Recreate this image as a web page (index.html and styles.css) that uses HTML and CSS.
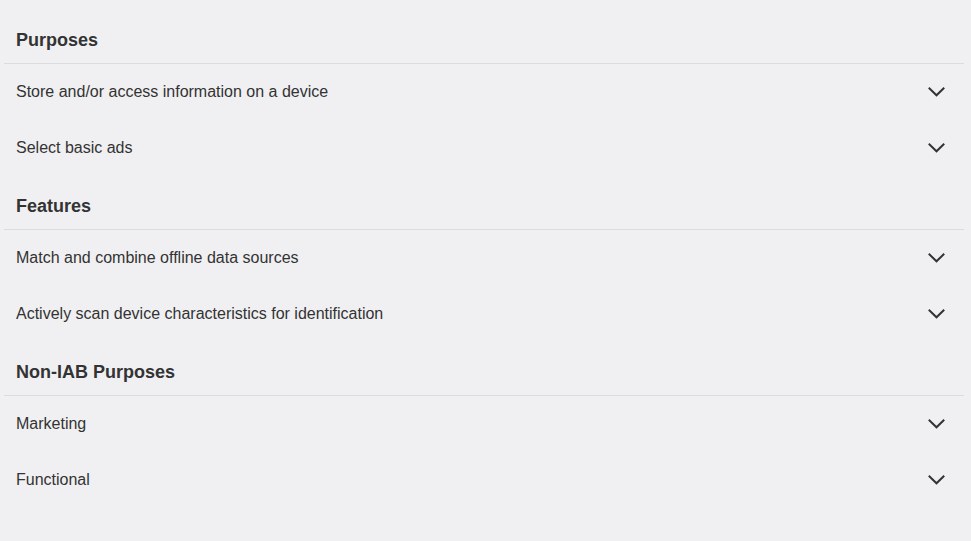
FILE: index.html
```html
<!DOCTYPE html>
<html lang="en">
<head>
<meta charset="utf-8">
<title>Purposes</title>
<link rel="stylesheet" href="styles.css">
</head>
<body>
<div class="page">
  <section class="group">
    <h2 class="group-title">Purposes</h2>
    <div class="item"><span class="item-label">Store and/or access information on a device</span><svg class="chev" viewBox="0 0 17 10" width="17" height="10"><path d="M1.5 1.5 L8.5 8.3 L15.5 1.5"/></svg></div>
    <div class="item"><span class="item-label">Select basic ads</span><svg class="chev" viewBox="0 0 17 10" width="17" height="10"><path d="M1.5 1.5 L8.5 8.3 L15.5 1.5"/></svg></div>
  </section>
  <section class="group">
    <h2 class="group-title">Features</h2>
    <div class="item"><span class="item-label">Match and combine offline data sources</span><svg class="chev" viewBox="0 0 17 10" width="17" height="10"><path d="M1.5 1.5 L8.5 8.3 L15.5 1.5"/></svg></div>
    <div class="item"><span class="item-label">Actively scan device characteristics for identification</span><svg class="chev" viewBox="0 0 17 10" width="17" height="10"><path d="M1.5 1.5 L8.5 8.3 L15.5 1.5"/></svg></div>
  </section>
  <section class="group">
    <h2 class="group-title">Non-IAB Purposes</h2>
    <div class="item"><span class="item-label">Marketing</span><svg class="chev" viewBox="0 0 17 10" width="17" height="10"><path d="M1.5 1.5 L8.5 8.3 L15.5 1.5"/></svg></div>
    <div class="item"><span class="item-label">Functional</span><svg class="chev" viewBox="0 0 17 10" width="17" height="10"><path d="M1.5 1.5 L8.5 8.3 L15.5 1.5"/></svg></div>
  </section>
</div>
</body>
</html>
```
FILE: styles.css
```css
html, body {
  margin: 0;
  padding: 0;
  background: #f0f0f2;
}
body {
  font-family: "Liberation Sans", Arial, Helvetica, sans-serif;
  color: #333333;
  width: 971px;
  height: 541px;
  overflow: hidden;
}
.page {
  padding: 10px 7px 0 4px;
}
.group-title {
  margin: 0;
  font-size: 18px;
  font-weight: bold;
  line-height: 24px;
  padding: 18px 12px 11px;
  border-bottom: 1px solid #dcdcdf;
  color: #333333;
}
.item {
  display: flex;
  align-items: center;
  justify-content: space-between;
  height: 56px;
  padding: 0 19px 0 12px;
  font-size: 16px;
}
.item-label {
  line-height: 20px;
}
.chev {
  fill: none;
  stroke: #333333;
  stroke-width: 2;
  stroke-linecap: square;
  stroke-linejoin: miter;
}
```
